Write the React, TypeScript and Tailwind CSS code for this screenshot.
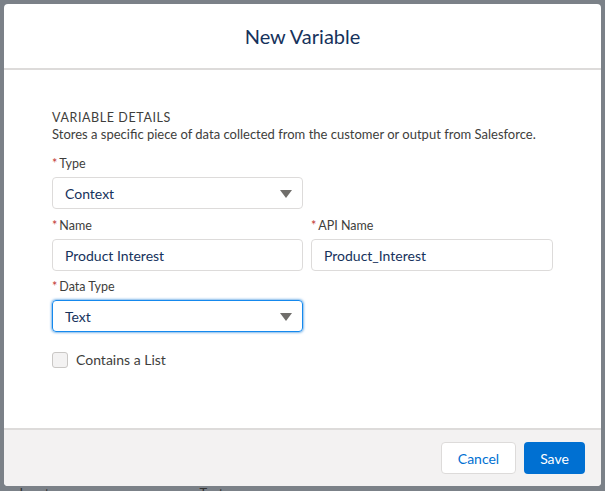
export default function App() {
  const f = { fontFamily: '"Lato","Liberation Sans",sans-serif' };
  const Arrow = () => (
    <svg width="12" height="8" viewBox="0 0 12 8" className="absolute right-[10px] top-[12px]"><path d="M0 0h12L6 8z" fill="#706e6b" /></svg>
  );
  const Label = ({ t }: { t: string }) => (
    <div className="text-[12.5px] text-[#3e3e3c] leading-none h-[12px] mb-[7px]"><span className="text-[#c23934] mr-[2px]">*</span>{t}</div>
  );
  return (
    <div style={f} className="w-[605px] h-[491px] bg-[#7b8188] relative overflow-hidden">
      <div className="absolute left-[8px] top-[484px] text-[13px] text-[#333] flex gap-[150px]"><span>erInput</span><span>Text</span></div>
      <div className="absolute left-[4px] top-[4px] w-[597px] h-[482px] bg-white rounded-[4px] flex flex-col overflow-hidden">
        <div className="h-[66px] border-b-2 border-[#dddbda] flex items-center justify-center text-[20px] text-[#16325c]">New Variable</div>
        <div className="flex-1 pl-[48px] pt-[40px]">
          <div className="text-[12.5px] tracking-[0.6px] text-[#3e3e3c] leading-[16px]">VARIABLE DETAILS</div>
          <div className="text-[13px] text-[#3e3e3c] leading-[16px]">Stores a specific piece of data collected from the customer or output from Salesforce.</div>
          <div className="mt-[16px]"><Label t="Type" /></div>
          <div className="relative w-[251px] h-[32px] border border-[#dddbda] rounded-[4px] flex items-center pl-[12px] text-[14px] text-[#16325c]">Context<Arrow /></div>
          <div className="flex gap-[8px] mt-[11px]">
            <div><Label t="Name" /><div className="w-[251px] h-[32px] border border-[#dddbda] rounded-[4px] flex items-center pl-[12px] text-[14px] text-[#16325c]">Product Interest</div></div>
            <div><Label t="API Name" /><div className="w-[242px] h-[32px] border border-[#dddbda] rounded-[4px] flex items-center pl-[12px] text-[14px] text-[#16325c]">Product_Interest</div></div>
          </div>
          <div className="mt-[10px]"><Label t="Data Type" /></div>
          <div className="relative w-[251px] h-[32px] border border-[#1589ee] shadow-[0_0_3px_#0070d2] rounded-[4px] flex items-center pl-[12px] text-[14px] text-[#16325c]">Text<Arrow /></div>
          <div className="flex items-center mt-[17px] gap-[8px]">
            <div className="w-[16px] h-[16px] border border-[#c9c7c5] bg-[#f3f2f2] rounded-[3px]" />
            <span className="text-[14px] text-[#3e3e3c]">Contains a List</span>
          </div>
        </div>
        <div className="h-[58px] border-t-2 border-[#dddbda] bg-[#f3f2f2] flex items-center justify-end gap-[8px] pr-[16px]">
          <button className="w-[75px] h-[32px] bg-white border border-[#dddbda] rounded-[4px] text-[14px] text-[#0070d2]">Cancel</button>
          <button className="w-[61px] h-[32px] bg-[#0070d2] rounded-[4px] text-[14px] text-white">Save</button>
        </div>
      </div>
    </div>
  );
}
